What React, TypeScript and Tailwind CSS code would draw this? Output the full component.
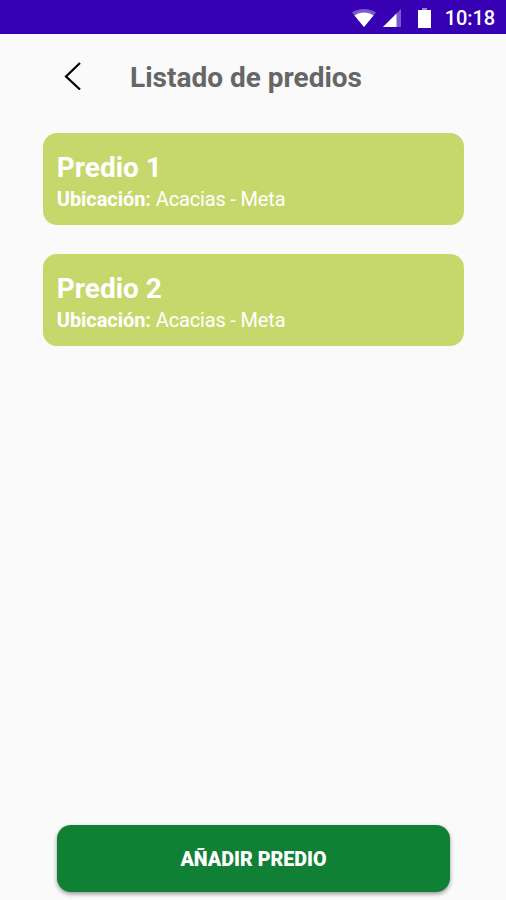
import React from "react";

interface Property {
  id: number;
  name: string;
  location: string;
}

const properties: Property[] = [
  { id: 1, name: "Predio 1", location: "Acacias - Meta" },
  { id: 2, name: "Predio 2", location: "Acacias - Meta" },
];

const StatusBar: React.FC = () => (
  <div className="flex h-[34px] shrink-0 items-center justify-end bg-[#3700b3] pt-[2px] pr-[11px] text-white">
    <svg className="h-[18px] w-6" viewBox="0 0 24 18">
      <path d="M12 18 0 3.500C3.400 1.200 7.500 0 12 0s8.600 1.200 12 3.500Z" fill="#fff" fillOpacity="0.35" />
      <path d="M12 18 2.500 6.500c5.200-4 13.800-4 19 0Z" fill="#fff" />
    </svg>
    <svg className="ml-[7px] h-[18px] w-[18px]" viewBox="0 0 18 18">
      <path d="M0 18 18 0v18Z" fill="#fff" fillOpacity="0.35" />
      <path d="M0 18 13.500 4.500V18Z" fill="#fff" />
    </svg>
    <svg className="ml-[17px] h-5 w-[13px]" viewBox="0 0 13 20">
      <path d="M4 0h5v2H4Z" fill="#fff" fillOpacity="0.5" />
      <path d="M0 2h13v18H0Z" fill="#fff" />
    </svg>
    <span className="ml-[14px] text-[20px] leading-none font-medium tracking-[-0.1px]">10:18</span>
  </div>
);

const PropertyCard: React.FC<{ property: Property }> = ({ property }) => (
  <div className="h-[92.5px] rounded-[14px] bg-[#c6d86b] px-[14px] pt-[18px] text-white">
    <h2 className="text-[28px] leading-[34px] font-bold">{property.name}</h2>
    <p className="pt-[0.5px] text-[20px] leading-[28px] tracking-[-0.16px]">
      <strong className="font-bold tracking-[-0.05px]">Ubicación:</strong> {property.location}
    </p>
  </div>
);

export default function App() {
  return (
    <div className="flex h-screen flex-col bg-[#fafafa] font-['Roboto',sans-serif]">
      <StatusBar />

      <header className="flex h-[84px] shrink-0 items-center pl-16">
        <button aria-label="Volver">
          <svg className="h-7 w-[17px]" viewBox="0 0 17 28" fill="none" stroke="#000" strokeWidth="2.2">
            <path d="M16 1 2 14.500l14 13" />
          </svg>
        </button>
        <h1 className="ml-[49px] pt-[3px] text-[28px] font-bold text-[#666]">Listado de predios</h1>
      </header>

      <main className="mt-[14.5px] flex flex-1 flex-col gap-[28.5px] pr-[42px] pl-[42.75px]">
        {properties.map((property) => (
          <PropertyCard key={property.id} property={property} />
        ))}
      </main>

      <footer className="shrink-0 pr-[56px] pb-[8.5px] pl-[57px]">
        <button className="h-[67px] w-full rounded-[14px] bg-[#108035] pt-[4px] text-[19.7px] font-black text-white shadow-[0_2px_4px_rgba(0,0,0,0.4)]">
          AÑADIR PREDIO
        </button>
      </footer>
    </div>
  );
}
